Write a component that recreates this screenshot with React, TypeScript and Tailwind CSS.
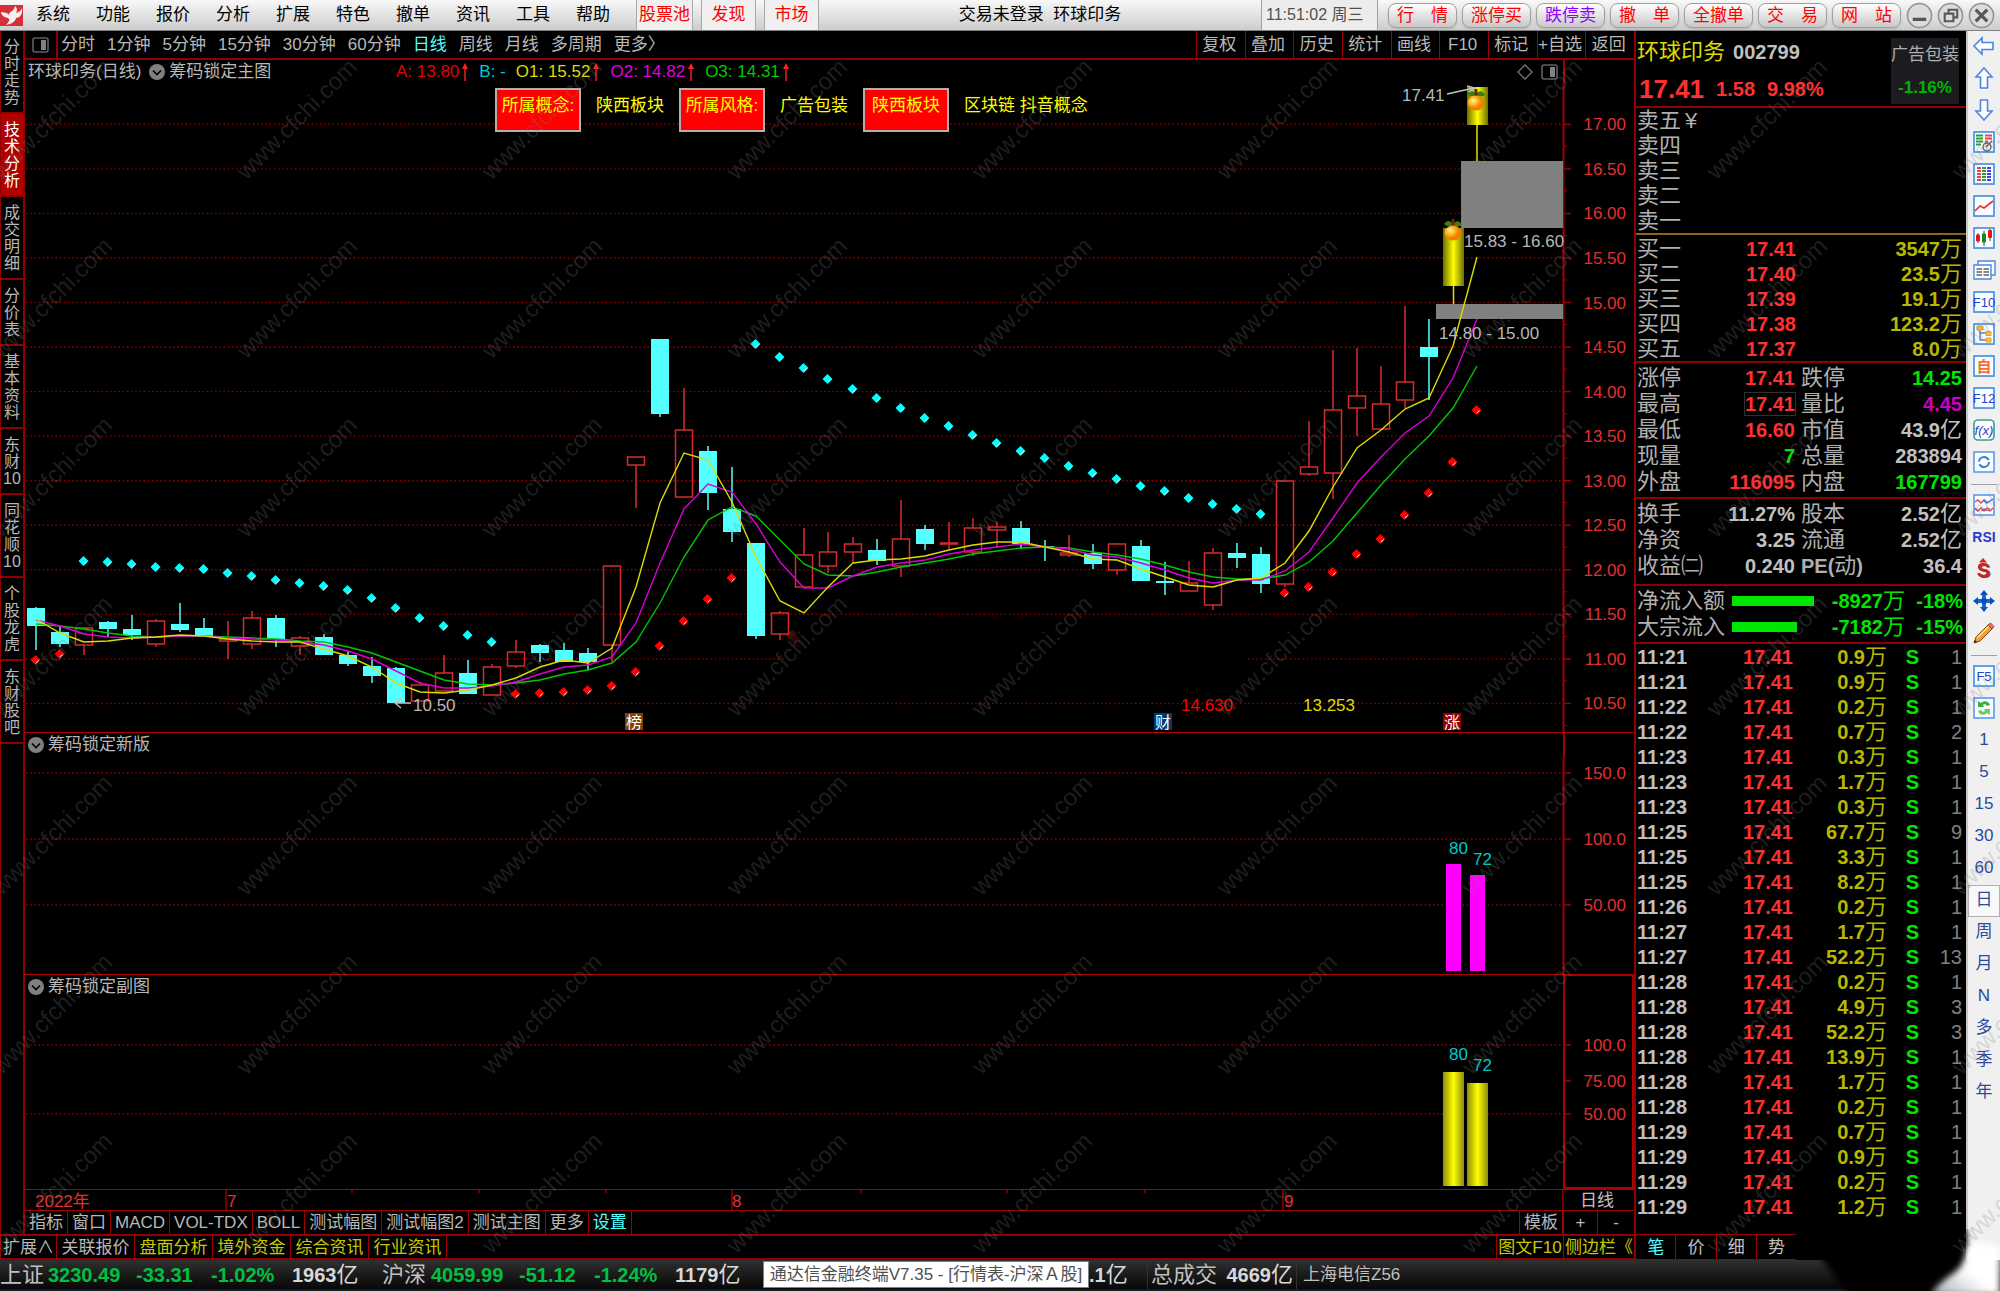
import React, { useState } from 'react';

const menus = ['系统', '功能', '报价', '分析', '扩展', '特色', '撤单', '资讯', '工具', '帮助'];
const hotMenus = ['股票池', '发现', '市场'];
const tradeButtons = ['行　情', '涨停买', '跌停卖', '撤　单', '全撤单', '交　易', '网　站'];
const periods = ['分时', '1分钟', '5分钟', '15分钟', '30分钟', '60分钟', '日线', '周线', '月线', '多周期', '更多〉'];
const chartTools = ['复权', '叠加', '历史', '统计', '画线', 'F10', '标记', '+自选', '返回'];
const sideTabs = [
  ['分', '时', '走', '势'],
  ['技', '术', '分', '析'],
  ['成', '交', '明', '细'],
  ['分', '价', '表'],
  ['基', '本', '资', '料'],
  ['东', '财', '10'],
  ['同', '花', '顺', '10'],
  ['个', '股', '龙', '虎'],
  ['东', '财', '股', '吧'],
];
const indicatorTabs = ['指标', '窗口', 'MACD', 'VOL-TDX', 'BOLL', '测试幅图', '测试幅图2', '测试主图', '更多', '设置'];

// [high, bodyTop, bodyBottom, low, up?]
type Candle = [number, number, number, number, number];
const candles: Candle[] = [
  [607, 608, 626, 650, 0], [625, 632, 644, 647, 0], [628, 628, 645, 655, 1], [621, 622, 629, 637, 0],
  [615, 629, 635, 640, 0], [619, 621, 644, 647, 1], [603, 624, 630, 632, 0], [618, 628, 637, 637, 0],
  [621, 639, 641, 659, 1], [611, 618, 644, 649, 1], [615, 618, 639, 647, 0], [636, 638, 646, 655, 1],
  [634, 637, 655, 655, 0], [651, 655, 664, 666, 0], [657, 666, 676, 683, 0], [667, 668, 703, 703, 0],
  [682, 685, 701, 701, 1], [655, 673, 691, 691, 1], [660, 673, 694, 694, 0], [664, 667, 695, 695, 1],
  [640, 652, 666, 668, 1], [644, 645, 653, 662, 0], [643, 650, 662, 662, 0], [648, 653, 662, 670, 0],
  [565, 566, 645, 662, 1], [457, 457, 465, 508, 1], [339, 339, 414, 417, 0], [388, 430, 497, 497, 1],
  [446, 451, 493, 510, 0], [467, 509, 532, 542, 0], [543, 543, 636, 639, 0], [611, 613, 634, 640, 1],
  [528, 555, 587, 587, 1], [532, 552, 566, 573, 1], [537, 544, 552, 563, 1], [539, 550, 561, 565, 0],
  [500, 539, 566, 577, 1], [525, 529, 544, 550, 0], [522, 543, 544, 549, 1], [518, 528, 552, 556, 1],
  [522, 527, 530, 547, 1], [521, 528, 544, 549, 0], [540, 546, 548, 561, 0], [535, 553, 555, 557, 1],
  [544, 553, 564, 569, 0], [543, 544, 570, 575, 1], [540, 546, 581, 581, 0], [562, 581, 583, 595, 0],
  [561, 583, 591, 591, 1], [548, 553, 605, 610, 1], [543, 553, 558, 568, 0], [547, 554, 584, 593, 0],
  [481, 481, 584, 587, 1], [421, 467, 474, 476, 1], [350, 410, 473, 499, 1], [348, 396, 408, 436, 1],
  [366, 404, 429, 429, 1], [306, 382, 400, 408, 1], [319, 347, 357, 400, 0],
];
const o1 = [619, 633, 642, 641, 638, 637, 635, 636, 639, 641, 642, 642, 649, 656, 667, 683, 692, 693, 690, 685, 678, 667, 660, 663, 648, 587, 503, 453, 460, 502, 557, 601, 613, 587, 563, 560, 559, 556, 550, 545, 542, 542, 547, 552, 559, 560, 569, 577, 585, 587, 580, 578, 563, 531, 487, 448, 430, 409, 398, 346, 257];
const o2 = [620, 626, 634, 637, 638, 637, 636, 636, 638, 639, 640, 642, 645, 651, 659, 671, 683, 688, 688, 686, 682, 674, 667, 665, 657, 623, 563, 509, 484, 492, 524, 562, 588, 588, 576, 567, 563, 560, 554, 550, 547, 544, 547, 549, 555, 557, 563, 570, 578, 583, 580, 580, 571, 552, 518, 483, 457, 433, 416, 378, 319];
const o3 = [624, 626, 629, 633, 636, 637, 636, 636, 637, 638, 639, 641, 642, 647, 653, 662, 671, 680, 684, 685, 683, 680, 674, 670, 663, 642, 603, 557, 520, 507, 516, 540, 564, 575, 576, 572, 567, 563, 559, 554, 551, 548, 547, 548, 552, 555, 559, 565, 572, 577, 579, 579, 575, 562, 541, 513, 485, 459, 436, 408, 366];
const upperDots: [number, number[]][] = [
  [2, [561, 562, 564, 567, 568, 569, 573, 576, 580, 583, 586, 590, 598, 608, 618, 626, 635, 642]],
  [30, [344, 357, 368, 379, 389, 398, 408, 418, 426, 435, 443, 451, 458, 466, 473, 479, 486, 491, 498, 504, 509, 514]],
];
const lowerDots: [number, number[]][] = [
  [0, [660, 654]],
  [20, [694, 693, 692, 690, 686, 672, 646, 621, 599, 578]],
  [52, [593, 587, 572, 554, 539, 515, 493, 462, 410]],
];
const prices = ['17.00', '16.50', '16.00', '15.50', '15.00', '14.50', '14.00', '13.50', '13.00', '12.50', '12.00', '11.50', '11.00', '10.50'];

const asks = ['卖五', '卖四', '卖三', '卖二', '卖一'];
const bids = [
  ['买一', '17.41', '3547'],
  ['买二', '17.40', '23.5'],
  ['买三', '17.39', '19.1'],
  ['买四', '17.38', '123.2'],
  ['买五', '17.37', '8.0'],
];
const RED = 'text-[#ff3030]';
const GREEN = 'text-[#00e600]';
const GRAY = 'text-[#c0c0c0]';
const stats = [
  ['涨停', '17.41', RED, '跌停', '14.25', GREEN, ''],
  ['最高', '17.41', RED, '量比', '4.45', 'text-[#c800c8]', ''],
  ['最低', '16.60', RED, '市值', '43.9', GRAY, '亿'],
  ['现量', '7', GREEN, '总量', '283894', GRAY, ''],
  ['外盘', '116095', RED, '内盘', '167799', GREEN, ''],
];
const stats2 = [
  ['换手', '11.27%', GRAY, '股本', '2.52', GRAY, '亿'],
  ['净资', '3.25', GRAY, '流通', '2.52', GRAY, '亿'],
  ['收益㈡', '0.240', GRAY, 'PE(动)', '36.4', GRAY, ''],
];
const ticks = [
  ['11:21', '0.9', '1'], ['11:21', '0.9', '1'], ['11:22', '0.2', '1'], ['11:22', '0.7', '2'],
  ['11:23', '0.3', '1'], ['11:23', '1.7', '1'], ['11:23', '0.3', '1'], ['11:25', '67.7', '9'],
  ['11:25', '3.3', '1'], ['11:25', '8.2', '1'], ['11:26', '0.2', '1'], ['11:27', '1.7', '1'],
  ['11:27', '52.2', '13'], ['11:28', '0.2', '1'], ['11:28', '4.9', '3'], ['11:28', '52.2', '3'],
  ['11:28', '13.9', '1'], ['11:28', '1.7', '1'], ['11:28', '0.2', '1'], ['11:29', '0.7', '1'],
  ['11:29', '0.9', '1'], ['11:29', '0.2', '1'], ['11:29', '1.2', '1'],
];

const cx = (i: number) => Math.round(35.5 + 24.03 * i);
const priceY = (p: number) => 124.3 + (17 - p) * 89.1;
const linePoints = (ys: number[]) => ys.map((y, i) => `${cx(i)},${y}`).join(' ');

const GridLine = ({ y, x1 = 26, x2 = 1563 }: { y: number; x1?: number; x2?: number }) => (
  <line x1={x1} x2={x2} y1={y} y2={y} stroke="#8c0000" strokeWidth="1.4" strokeDasharray="1.6 2.6" />
);

const AxisLabel = ({ y, text }: { y: number; text: string }) => (
  <>
    <line x1="1563" x2="1571" y1={y} y2={y} stroke="#a00000" strokeWidth="1.4" />
    <text x="1626" y={y + 6} textAnchor="end" fill="#e03030">{text}</text>
  </>
);

const Fruit = ({ x, y }: { x: number; y: number }) => (
  <g>
    <path d={`M${x - 9} ${y - 8} q4 -6 9 0 q5 -6 9 1 q-5 3 -9 0 q-5 3 -9 -1z`} fill="#3f7d12" />
    <path d={`M${x} ${y - 6} l0 -7`} stroke="#5a2c0c" strokeWidth="3" />
    <ellipse cx={x} cy={y + 1} rx="8.5" ry="7.5" fill="url(#fruit)" />
  </g>
);

const Diamond = ({ x, y, color }: { x: number; y: number; color: string }) => (
  <g>
    <path d={`M${x - 0.5} ${y - 5} l5 5 l-5 5 l-5 -5z`} fill={color} />
    <path d={`M${x + 2.5} ${y + 0.5} l-2.5 2.8`} stroke="#ffffff" strokeWidth="1" />
  </g>
);

const Marker = ({ x, text, fill }: { x: number; text: string; fill: string }) => (
  <g>
    <rect x={x} y="713" width="18" height="17" fill={fill} />
    <text x={x + 9} y="728" textAnchor="middle" fontSize="16" fill="#ffffff">{text}</text>
  </g>
);

const MainChart = () => (
  <svg viewBox="25 84 1609 648" className="block w-full h-auto text-[17px]" role="img" aria-label="环球印务 日线">
    <defs>
      <linearGradient id="gold">
        <stop offset="0" stopColor="#6e6e00" />
        <stop offset="0.5" stopColor="#ffff00" />
        <stop offset="1" stopColor="#6e6e00" />
      </linearGradient>
      <radialGradient id="fruit" cx="0.35" cy="0.35">
        <stop offset="0" stopColor="#fff6b0" />
        <stop offset="0.45" stopColor="#ffc02a" />
        <stop offset="1" stopColor="#f07c00" />
      </radialGradient>
      <linearGradient id="trail" x1="0" y1="0" x2="1" y2="1">
        <stop offset="0" stopColor="#701818" />
        <stop offset="1" stopColor="#000000" stopOpacity="0" />
      </linearGradient>
    </defs>
    {prices.map(p => {
      const y = priceY(Number(p));
      return (
        <React.Fragment key={p}>
          {p === '11.00' ? (
            <>
              <GridLine y={y} x2={786} />
              <GridLine y={y} x1={1248} />
            </>
          ) : (
            <GridLine y={y} />
          )}
          <AxisLabel y={y} text={p} />
          <line x1="1563" x2="1567" y1={y + 22} y2={y + 22} stroke="#a00000" />
        </React.Fragment>
      );
    })}
    <line x1="1563.5" x2="1563.5" y1="84" y2="732" stroke="#a00000" strokeWidth="2" />
    <path d="M785 635 L793 630 L809 650 L800 650z" fill="url(#trail)" />

    <rect x="1461" y="161" width="102" height="67" fill="#808080" />
    <rect x="1436" y="304" width="127" height="15" fill="#808080" />

    {candles.map(([high, top, bottom, low, up], i) => {
      const x = cx(i);
      return up ? (
        <g key={i} stroke="#d42c2c" strokeWidth="1.5" fill="none">
          <path d={`M${x} ${high} V${top} M${x} ${bottom} V${low}`} />
          <rect x={x - 8.5} y={top} width="17" height={bottom - top} />
        </g>
      ) : (
        <g key={i} fill="#54ffff">
          <rect x={x - 0.75} y={high} width="1.5" height={low - high} />
          <rect x={x - 9} y={top} width="18" height={bottom - top} />
        </g>
      );
    })}
    <rect x="1443" y="228" width="21" height="58" fill="url(#gold)" />
    <rect x="1467" y="87" width="21" height="38" fill="url(#gold)" />
    <path d="M1453.5 286 V304 M1477 125 V161" stroke="#e0e000" strokeWidth="1.5" />
    <Fruit x={1453} y={232} />
    <Fruit x={1476} y={102} />

    <polyline points={linePoints(o3)} fill="none" stroke="#00c800" strokeWidth="1.4" />
    <polyline points={linePoints(o2)} fill="none" stroke="#d800d8" strokeWidth="1.4" />
    <polyline points={linePoints(o1)} fill="none" stroke="#dcdc00" strokeWidth="1.4" />

    {upperDots.map(([start, ys]) => ys.map((y, i) => <Diamond key={start + i} x={cx(start + i)} y={y} color="#00ffff" />))}
    {lowerDots.map(([start, ys]) => ys.map((y, i) => <Diamond key={start + i} x={cx(start + i)} y={y} color="#ff0000" />))}

    <g fill="#b8b8b8">
      <text x="1402" y="101">17.41</text>
      <text x="1464" y="247">15.83 - 16.60</text>
      <text x="1439" y="339">14.80 - 15.00</text>
      <text x="413" y="711">10.50</text>
    </g>
    <path d="M1447 94 L1474 88 M1467 86 L1475 88 L1469 92 M395 703 H411 M401 698 L395 703 L401 708" fill="none" stroke="#c0c0c0" strokeWidth="1.4" />
    <text x="1181" y="711" fill="#ff0000">14.630</text>
    <text x="1303" y="711" fill="#dcdc00">13.253</text>
    <Marker x={625} text="榜" fill="#804000" />
    <Marker x={1154} text="财" fill="#003a70" />
    <Marker x={1443} text="涨" fill="#900000" />
  </svg>
);

const LockChart = () => (
  <svg viewBox="25 757 1609 217" className="block w-full h-auto text-[17px]" role="img" aria-label="筹码锁定新版">
    {[['150.0', 773], ['100.0', 839], ['50.00', 905]].map(([t, y]) => (
      <React.Fragment key={t}>
        <GridLine y={y as number} />
        <AxisLabel y={y as number} text={t as string} />
      </React.Fragment>
    ))}
    <line x1="1563.5" x2="1563.5" y1="757" y2="974" stroke="#a00000" strokeWidth="2" />
    <rect x="1446" y="864" width="15" height="107" fill="#ff00ff" />
    <rect x="1470" y="875" width="15" height="96" fill="#ff00ff" />
    <text x="1449" y="854" fill="#00c8c8">80</text>
    <text x="1473" y="865" fill="#00c8c8">72</text>
  </svg>
);

const LockSubChart = () => (
  <svg viewBox="25 999 1609 190" className="block w-full h-auto text-[17px]" role="img" aria-label="筹码锁定副图">
    <defs>
      <linearGradient id="goldBar">
        <stop offset="0" stopColor="#8c8c10" />
        <stop offset="0.5" stopColor="#ffff00" />
        <stop offset="1" stopColor="#8c8c10" />
      </linearGradient>
    </defs>
    {[['100.0', 1045], ['75.00', 1081], ['50.00', 1114]].map(([t, y]) => (
      <React.Fragment key={t}>
        {t !== '75.00' && <GridLine y={y as number} />}
        <AxisLabel y={y as number} text={t as string} />
      </React.Fragment>
    ))}
    <path d="M1564 999 V1188 H1633 V999" fill="none" stroke="#b00000" strokeWidth="2" />
    <rect x="1443" y="1072" width="21" height="114" fill="url(#goldBar)" />
    <rect x="1467" y="1083" width="21" height="103" fill="url(#goldBar)" />
    <text x="1449" y="1060" fill="#00c8c8">80</text>
    <text x="1473" y="1071" fill="#00c8c8">72</text>
  </svg>
);

const DateAxis = () => (
  <svg viewBox="25 1190 1609 20" className="block w-full h-auto text-[17px]" role="img" aria-label="日期">
    <g stroke="#a00000" strokeWidth="1.4">
      {[226, 732, 1283, 1563].map(x => <line key={x} x1={x} x2={x} y1="1190" y2="1210" />)}
      {[352, 479, 606, 861, 1007, 1145].map(x => <line key={x} x1={x} x2={x} y1="1190" y2="1193" />)}
    </g>
    <g fill="#e03030">
      <text x="35" y="1207">2022年</text>
      <text x="227" y="1207">7</text>
      <text x="732" y="1207">8</text>
      <text x="1284" y="1207">9</text>
    </g>
    <text x="1580" y="1206" fill="#c0c0c0">日线</text>
  </svg>
);

const Chevron = () => (
  <svg viewBox="0 0 16 16" className="size-4 shrink-0">
    <circle cx="8" cy="8" r="8" fill="#808080" />
    <path d="M4 6.5 L8 10.5 L12 6.5" fill="none" stroke="#000000" strokeWidth="1.6" />
  </svg>
);

const PanelIcon = () => (
  <svg viewBox="0 0 18 16" className="w-[18px] h-4">
    <rect x="1" y="1" width="15" height="14" rx="2" fill="none" stroke="#606060" strokeWidth="1.6" />
    <rect x="9" y="3" width="5" height="10" fill="#808080" />
  </svg>
);

const Up = () => (
  <svg viewBox="0 0 8 18" className="w-2 h-[18px]">
    <path d="M4 0 L7 6 H1z" fill="#ff2020" />
    <path d="M4 5 V18" stroke="#ff2020" strokeWidth="1.4" />
  </svg>
);

const PanelHeader = ({ title, active = false }: { title: string; active?: boolean }) => (
  <div className="flex h-6 items-center">
    <button className="flex items-center gap-1 pl-[3px]">
      <Chevron />
      <span>{title}</span>
    </button>
    <div className={`ml-auto h-full w-[71px] border-l-2 border-[#a00000] ${active ? 'border-t border-r-2' : ''}`} />
  </div>
);

const Frame = ({ children, color = '#3a8ee8' }: { children?: React.ReactNode; color?: string }) => (
  <svg viewBox="0 0 24 24" className="size-6">
    <rect x="2" y="2" width="20" height="20" fill="#fafcff" stroke={color} strokeWidth="1.6" />
    {children}
  </svg>
);

const FText = ({ children }: { children: string }) => (
  <text x="12" y="17" textAnchor="middle" fontSize="13" fill="#2244cc">{children}</text>
);

const toolIcons: [string, React.ReactNode][] = [
  ['后退', <svg viewBox="0 0 24 24" className="size-6"><path d="M2 12 L10 4 V8.5 H21 V15.5 H10 V20z" fill="#ffffff" stroke="#4a86e0" strokeWidth="1.6" /></svg>],
  ['上一个', <svg viewBox="0 0 24 24" className="size-6"><path d="M12 2 L20 11 H15.5 V22 H8.5 V11 H4z" fill="#ffffff" stroke="#4a86e0" strokeWidth="1.6" /></svg>],
  ['下一个', <svg viewBox="0 0 24 24" className="size-6"><path d="M12 22 L20 13 H15.5 V2 H8.5 V13 H4z" fill="#ffffff" stroke="#4a86e0" strokeWidth="1.6" /></svg>],
  ['自选报价', (
    <Frame>
      <path d="M4 5.5h7M4 8.5h7M4 11.5h7M4 14.5h5" stroke="#2f9a3c" strokeWidth="2" />
      <path d="M13 5.5h7M13 8.5h7M13 11.5h3" stroke="#f04040" strokeWidth="2" />
      <circle cx="15" cy="17" r="4" fill="#e8e8e8" stroke="#606060" strokeWidth="1.4" />
      <path d="M14 17 L20 11" stroke="#606060" strokeWidth="1.6" />
    </Frame>
  )],
  ['行情列表', (
    <Frame>
      <path d="M7 5V20" stroke="#f04040" strokeWidth="4" strokeDasharray="2 1" />
      <path d="M12 5V20" stroke="#2f9a3c" strokeWidth="4" strokeDasharray="2 1" />
      <path d="M17 5V20" stroke="#4040f0" strokeWidth="4" strokeDasharray="2 1" />
    </Frame>
  )],
  ['分时图', <Frame><path d="M3 17 L8 12 L12 14 L21 7" fill="none" stroke="#e83030" strokeWidth="1.6" /></Frame>],
  ['K线图', (
    <Frame>
      <path d="M6 7V17M12 5V20M18 3V15" stroke="#404040" />
      <path d="M4.5 9h3v6h-3zM16.5 4.5h3v7h-3z" fill="#f01010" stroke="#f01010" />
      <path d="M10.5 8h3v8h-3z" fill="#108a20" stroke="#108a20" />
    </Frame>
  )],
  ['多窗口', (
    <svg viewBox="0 0 24 24" className="size-6">
      <path d="M6 3H23V17H6z" fill="#ffffff" stroke="#4a86e0" strokeWidth="1.4" />
      <path d="M2 7H19V21H2z" fill="#ffffff" stroke="#4a86e0" strokeWidth="1.4" />
      <path d="M4.5 11h5.5M4.5 14h5.5M4.5 17h5.5M11.5 11h5.5M11.5 14h5.5M11.5 17h5.5" stroke="#606060" strokeWidth="1.5" />
    </svg>
  )],
  ['F10', <Frame><FText>F10</FText></Frame>],
  ['板块树', (
    <Frame>
      <path d="M8 8V18H14M8 11H14" fill="none" stroke="#5080c0" strokeWidth="1.4" />
      <path d="M5 4h6v4h-6zM14 9.5h5v4h-5zM14 16h5v4h-5z" fill="#ffbe3c" stroke="#e8a020" />
    </Frame>
  )],
  ['自选股', <Frame><text x="12" y="18" textAnchor="middle" fontSize="15" fontWeight="bold" fill="#f07030">自</text></Frame>],
  ['F12', <Frame><FText>F12</FText></Frame>],
  ['公式', (
    <svg viewBox="0 0 24 24" className="size-6">
      <rect x="2" y="2" width="20" height="20" rx="4" fill="#ffffff" stroke="#3a9a9a" strokeWidth="1.6" />
      <text x="12" y="17" textAnchor="middle" fontSize="13" fontStyle="italic" fill="#2244cc">f(x)</text>
    </svg>
  )],
  ['刷新', <Frame color="#5a9af0"><circle cx="12" cy="12" r="5" fill="none" stroke="#3a80c8" strokeWidth="2" strokeDasharray="13 2.7" /></Frame>],
  ['', null],
  ['叠加曲线', (
    <Frame color="#5a9af0">
      <path d="M3 9 L6 7 L9 10 L12 7 L15 10" fill="none" stroke="#e04040" strokeWidth="1.4" />
      <path d="M12 7 L15 10 L18 8 L21 6 M3 16 L6 18" fill="none" stroke="#4060e0" strokeWidth="1.4" />
      <path d="M3 15 L6 18 L9 15 L12 18 L15 15 L18 18 L21 15" fill="none" stroke="#e04040" strokeWidth="1.4" />
      <path d="M9 18 L12 16 L15 18 L18 15" fill="none" stroke="#4060e0" />
    </Frame>
  )],
  ['RSI', <span className="text-[14px] font-bold text-[#2a3ad0]">RSI</span>],
  ['资金', (
    <svg viewBox="0 0 24 24" className="size-6">
      <text x="12.5" y="20.5" textAnchor="middle" fontSize="20" fontWeight="bold" fill="#505050">S</text>
      <text x="11.5" y="20" textAnchor="middle" fontSize="20" fontWeight="bold" fill="#d42020">S</text>
      <path d="M11 1 L15 5.5 H7z" fill="#d42020" />
    </svg>
  )],
  ['移动', (
    <svg viewBox="0 0 24 24" className="size-6">
      <path d="M12 1 L16 6 H8zM12 23 L16 18 H8zM1 12 L6 8 V16zM23 12 L18 8 V16z" fill="#0a50b8" />
      <path d="M12 6V18M6 12H18" stroke="#1a68d8" strokeWidth="4" strokeDasharray="4 4" />
      <circle cx="12" cy="12" r="3" fill="#0a50b8" />
    </svg>
  )],
  ['画笔', (
    <svg viewBox="0 0 24 24" className="size-6">
      <path d="M2 22 L4 16 L16 4 L20 8 L8 20z" fill="#f0a030" stroke="#7a4a10" />
      <path d="M5 17 L17 5" stroke="#ffe080" strokeWidth="1.6" />
      <path d="M16 4 L18.5 2 L22 5.5 L20 8z" fill="#e87070" stroke="#a04040" />
      <path d="M2 22 L3 19 L5 21z" fill="#202020" />
    </svg>
  )],
  ['', null],
  ['F5', <Frame><FText>F5</FText></Frame>],
  ['同步', (
    <Frame color="#5a9af0">
      <path d="M6 11 V5 L9 7 C12 4 17 5 18 9 L15 10 C14 8 12 8 11 9 L12 11z" fill="#3cb044" />
      <path d="M18 13 V19 L15 17 C12 20 7 19 6 15 L9 14 C10 16 12 16 13 15 L12 13z" fill="#6ccc60" />
    </Frame>
  )],
];
const periodKeys = ['1', '5', '15', '30', '60', '日', '周', '月', 'N', '多', '季', '年'];

const TopBar = () => (
  <header className="flex h-[31px] items-center border-b border-[#808080] bg-linear-to-b from-[#f8f8f8] to-[#cdcdcd] text-black">
    <svg viewBox="0 0 24 24" className="size-6 shrink-0">
      <rect x="0" y="2" width="23" height="21" fill="#d83038" />
      <path d="M1 9 C5 10 7 9 9 12 C9 8 14 9 15 3 C18 6 17 8 16 10 C19 9 21 8 22 5 C23 12 19 15 16 15 C15 19 11 21 6 22 C10 18 10 16 8 15 C5 14 2 14 1 9z" fill="#f8f0f0" />
    </svg>
    <nav className="flex pl-3">
      {menus.map(m => <button key={m} className="w-[60px] text-left">{m}</button>)}
    </nav>
    <div className="flex h-full gap-2">
      {hotMenus.map(m => (
        <button key={m} className="h-full border-x border-[#a8a8a8] bg-[#f0f0f0] px-[2px] min-w-[55px] text-[#ff0000]">{m}</button>
      ))}
    </div>
    <div className="flex-1 text-center">交易未登录&nbsp; 环球印务</div>
    <div className="flex h-full w-[117px] shrink-0 items-center border-x border-[#a0a0a0] bg-[#ececec] pl-1 text-[16px] whitespace-nowrap text-[#505050]">11:51:02 周三</div>
    <div className="flex gap-[5px] pl-[10px]">
      {tradeButtons.map((b, i) => (
        <button key={b} className={`h-[25px] w-[69px] rounded-lg border border-[#a0a0a0] bg-linear-to-b from-white to-[#c8c8c8] leading-none whitespace-nowrap shadow ${i === 2 ? 'text-[#9000ff]' : 'text-[#ff0000]'}`}>{b}</button>
      ))}
    </div>
    <div className="flex gap-1 px-[5px]">
      {['M7 18H21', 'M8 12H17V20H8zM12 12V8H21V16H17', 'M8 8L20 20M20 8L8 20'].map((d, i) => (
        <button key={d} aria-label={['最小化', '还原', '关闭'][i]}>
          <svg viewBox="0 0 28 28" className="size-[27px]">
            <circle cx="14" cy="14" r="12.5" fill="#dcdcdc" stroke="#909090" strokeWidth="1.6" />
            <path d={d} fill="none" stroke="#585858" strokeWidth={i === 1 ? 2.2 : 3.4} />
          </svg>
        </button>
      ))}
    </div>
  </header>
);

const StatRows = ({ rows }: { rows: string[][] }) => (
  <table className="w-full table-fixed leading-none">
    <tbody>
      {rows.map(([l1, v1, c1, l2, v2, c2, unit]) => (
        <tr key={l1} className="h-[26px]">
          <th scope="row" className="w-[70px] text-left text-[22px] font-normal whitespace-nowrap text-[#b0b0b0]">{l1}</th>
          <td className={`w-[88px] text-right font-bold ${c1}`}>
            {l1 === '最高' ? <span className="outline outline-[#303030]">{v1}</span> : v1}
          </td>
          <th scope="row" className="w-[70px] pl-[6px] text-left text-[22px] font-normal whitespace-nowrap text-[#b0b0b0]">
            {l2 === 'PE(动)' ? <><b className="text-[20px]">PE(</b>动<b className="text-[20px]">)</b></> : l2}
          </th>
          <td className={c2}>
            <div className="flex h-[26px] items-center justify-end"><b>{v2}</b><span className="text-[22px]">{unit}</span></div>
          </td>
        </tr>
      ))}
    </tbody>
  </table>
);

const QuotePanel = () => (
  <aside className="flex w-[332px] shrink-0 flex-col border-l-2 border-[#900000] text-[20px] leading-none text-[#b0b0b0]">
    <div className="flex h-[77px] justify-between border-b-2 border-[#900000] pr-[7px] pl-[1px]">
      <div>
        <div className="flex items-center gap-2 pt-2">
          <h1 className="text-[22px] leading-[26px] text-[#dcdc00]">环球印务</h1>
          <b className="text-[#c0c0c0]">002799</b>
        </div>
        <div className="flex items-center gap-3 pt-[11px] pl-[2px] font-bold text-[#ff3030]">
          <span className="text-[26px]">17.41</span>
          <span>1.58</span>
          <span>9.98%</span>
        </div>
      </div>
      <div className="mt-[7px] flex h-[66px] w-[68px] flex-col items-center gap-[16px] bg-[#1c1c20] pt-2 text-[17px] whitespace-nowrap">
        <span>广告包装</span>
        <b className="text-[#00b400]">-1.16%</b>
      </div>
    </div>
    <div className="border-b-2 border-[#8a6420] pl-[1px]">
      {asks.map((a, i) => (
        <div key={a} className="flex h-[25px] items-center text-[22px]">{a}{i === 0 && <span className="pl-1">¥</span>}</div>
      ))}
    </div>
    <div className="border-b-2 border-[#900000] pt-[1px]">
      <table className="w-full table-fixed">
        <tbody>
          {bids.map(([label, price, vol]) => (
            <tr key={label} className="h-[25px]">
              <th scope="row" className="w-[70px] pl-[1px] text-left text-[22px] font-normal">{label}</th>
              <td className="w-[90px] text-right font-bold text-[#ff3030]">{price}</td>
              <td className="pr-1 text-[#b8b800]">
                <div className="flex h-[25px] items-center justify-end"><b>{vol}</b><span className="text-[22px]">万</span></div>
              </td>
            </tr>
          ))}
        </tbody>
      </table>
    </div>
    <div className="border-b-2 border-[#900000] py-[2px] pr-1 pl-[1px]"><StatRows rows={stats} /></div>
    <div className="border-b-2 border-[#900000] pt-[2px] pr-1 pb-[5px] pl-[1px]"><StatRows rows={stats2} /></div>
    <div className="border-b-2 border-[#900000] py-[2px] pr-[3px] pl-[1px]">
      {[['净流入额', '-8927', '-18%', 'w-[82px]'], ['大宗流入', '-7182', '-15%', 'w-[65px]']].map(([label, v, pct, w]) => (
        <div key={label} className="flex h-[26px] items-center text-[#00e600]">
          <span className="w-[95px] text-[22px] text-[#b0b0b0]">{label}</span>
          <span className={`h-[10px] bg-[#00e600] ${w}`} />
          <b className="ml-auto">{v}</b><span className="text-[22px]">万</span>
          <b className="w-[58px] text-right">{pct}</b>
        </div>
      ))}
    </div>
    <table className="w-full table-fixed">
      <tbody>
        {ticks.map(([time, amount, count], i) => (
          <tr key={i} className="h-[25px] font-bold">
            <td className="w-[60px] pl-[1px] text-[#c0c0c0]">{time}</td>
            <td className="w-[97px] text-right text-[#ff3030]">17.41</td>
            <td className="w-[94px] text-[#b8b800]">
              <div className="flex h-[25px] items-center justify-end">{amount}<span className="text-[22px] font-normal">万</span></div>
            </td>
            <td className="w-[34px] pr-[2px] text-right text-[#00e600]">S</td>
            <td className="pr-1 text-right font-normal text-[#808080]">{count}</td>
          </tr>
        ))}
      </tbody>
    </table>
    <div className="mt-auto flex h-[26px] w-[160px] border-y border-[#a00000] text-[17px] text-[#c0c0c0]">
      {['笔', '价', '细', '势'].map(t => (
        <button key={t} className={`flex-1 border-r border-[#a00000] last:border-r-0 ${t === '笔' ? 'text-[#54ffff]' : ''}`}>{t}</button>
      ))}
    </div>
  </aside>
);

const StatusBar = () => (
  <footer className="flex h-[31px] items-center border-b-2 border-[#141c28] bg-linear-to-b from-[#303030] to-[#080808] text-[20px] leading-none whitespace-nowrap text-[#c0c0c0]">
    <div className="flex w-[382px] items-center font-bold text-[#00c040]">
      <span className="w-[48px] text-[22px] font-normal text-[#c0c0c0]">上证</span>
      <span className="w-[88px]">3230.49</span>
      <span className="w-[75px]">-33.31</span>
      <span className="w-[81px]">-1.02%</span>
      <span className="text-[#d8d8d8]">1963<span className="text-[22px] font-normal">亿</span></span>
    </div>
    <div className="flex w-[381px] items-center font-bold text-[#00c040]">
      <span className="w-[49px] text-[22px] font-normal text-[#c0c0c0]">沪深</span>
      <span className="w-[88px]">4059.99</span>
      <span className="w-[75px]">-51.12</span>
      <span className="w-[81px]">-1.24%</span>
      <span className="text-[#d8d8d8]">1179<span className="text-[22px] font-normal">亿</span></span>
    </div>
    <div className="flex h-[27px] w-[326px] items-center justify-center border border-[#808080] bg-white text-[17px] text-[#505050]">通达信金融终端V7.35 - [行情表-沪深Ａ股]</div>
    <div className="flex w-[58px] items-center font-bold text-[#d8d8d8]">.1<span className="text-[22px] font-normal">亿</span></div>
    <div className="flex h-full w-[150px] items-center justify-between border-x border-[#303030] px-[3px]">
      <span className="text-[22px]">总成交</span>
      <span className="font-bold text-[#d8d8d8]">4669<span className="text-[22px] font-normal">亿</span></span>
    </div>
    <span className="pl-[6px] text-[17px]">上海电信Z56</span>
  </footer>
);

const Watermark = () => (
  <svg className="pointer-events-none absolute inset-0 h-full w-full" aria-hidden="true">
    <defs>
      <pattern id="wm" x="-70" y="29" width="245" height="179" patternUnits="userSpaceOnUse">
        <text x="122" y="98" textAnchor="middle" fontSize="24" fill="#808080" fillOpacity="0.23" transform="rotate(-45 122 90)">www.cfchi.com</text>
      </pattern>
    </defs>
    <rect y="60" width="100%" height="1200" fill="url(#wm)" />
  </svg>
);

export default function App() {
  const [period, setPeriod] = useState('日线');
  const [sideTab, setSideTab] = useState(1);

  return (
    <div className="relative flex flex-col overflow-hidden bg-black font-['Liberation_Sans','Noto_Sans_CJK_SC',sans-serif] text-[17px] leading-6 text-[#b8b8b8]">
      <TopBar />
      <div className="flex">
        <main className="min-w-0 flex-1">
          <div className="flex">
            <nav className="flex w-[25px] shrink-0 flex-col border-b-2 border-l border-[#900000] text-[16px]">
              {sideTabs.map((chars, i) => (
                <button
                  key={i}
                  onClick={() => setSideTab(i)}
                  className={`border-r-2 border-b-2 border-[#900000] leading-[17px] ${chars.length === 4 ? 'h-[83px]' : 'h-[66px]'} ${sideTab === i ? 'bg-[#b00000] text-white' : ''}`}
                >
                  {chars.map(c => <span key={c} className="block">{c}</span>)}
                </button>
              ))}
              <div className="flex-1 border-r-2 border-[#900000]" />
            </nav>

            <div className="min-w-0 flex-1">
              <div className="flex h-[29px] items-center border-b-2 border-[#900000] whitespace-nowrap">
                <button aria-label="侧栏" className="flex h-full w-[33px] items-center justify-center border-r-2 border-[#900000]"><PanelIcon /></button>
                <div className="flex gap-3 pl-[3px]">
                  {periods.map(p => (
                    <button key={p} onClick={() => setPeriod(p)} className={period === p ? 'text-[#54ffff]' : ''}>{p}</button>
                  ))}
                </div>
                <div className="ml-auto grid h-full w-[438px] grid-cols-9">
                  {chartTools.map(t => <button key={t} className="border-l border-[#a00000] pr-[3px]">{t}</button>)}
                </div>
              </div>

              <section className="relative border-b border-[#b00000]">
                <div className="flex h-6 items-center whitespace-nowrap">
                  <div className="flex w-[371px] items-center gap-2 pl-[3px]">
                    <span>环球印务(日线)</span>
                    <button className="flex items-center gap-1"><Chevron />筹码锁定主图</button>
                  </div>
                  <div className="flex items-center gap-[10px]">
                    <span className="flex items-center gap-[2px] text-[#e00000]">A: 13.80<Up /></span>
                    <span className="text-[#00c8d8]">B: -</span>
                    <span className="flex items-center gap-[2px] text-[#dcdc00]">O1: 15.52<Up /></span>
                    <span className="flex items-center gap-[2px] text-[#e000e0]">O2: 14.82<Up /></span>
                    <span className="flex items-center gap-[2px] text-[#00c800]">O3: 14.31<Up /></span>
                  </div>
                  <div className="ml-auto flex items-center gap-2 pr-1">
                    <svg viewBox="0 0 16 16" className="size-4"><path d="M8 1 L15 8 L8 15 L1 8z" fill="none" stroke="#707070" strokeWidth="1.4" /></svg>
                    <PanelIcon />
                  </div>
                  <div className="h-full w-[71px] border-l-2 border-[#a00000]" />
                </div>
                <MainChart />
                <div className="absolute top-7 left-[470px] flex gap-[15px] whitespace-nowrap text-[#ffff00]">
                  <span className="h-[44px] w-[86px] border-2 border-[#b0b0b0] bg-[#ff0000] pt-[4px] text-center">所属概念:</span>
                  <span className="pt-[6px]">陕西板块</span>
                  <span className="h-[44px] w-[86px] border-2 border-[#b0b0b0] bg-[#ff0000] pt-[4px] text-center">所属风格:</span>
                  <span className="pt-[6px]">广告包装</span>
                  <span className="h-[44px] w-[86px] border-2 border-[#b0b0b0] bg-[#ff0000] pt-[4px] text-center">陕西板块</span>
                  <span className="pt-[6px]">区块链 抖音概念</span>
                </div>
              </section>

              <section className="border-b border-[#b00000]">
                <PanelHeader title="筹码锁定新版" />
                <LockChart />
              </section>
              <section className="border-b border-[#b00000]">
                <PanelHeader title="筹码锁定副图" active />
                <LockSubChart />
              </section>
              <section className="border-b border-[#a00000]">
                <DateAxis />
              </section>

              <div className="flex h-[25px] border-b-2 border-[#900000] whitespace-nowrap">
                {indicatorTabs.map(t => (
                  <button key={t} className={`border-r border-[#a00000] px-1 ${t === '设置' ? 'text-[#54ffff]' : ''}`}>{t}</button>
                ))}
                <button className="ml-auto w-[44px] border-x border-[#a00000]">模板</button>
                <button aria-label="放大" className="w-[35px] border-x border-[#a00000]">+</button>
                <button aria-label="缩小" className="w-[36px]">-</button>
              </div>
            </div>
          </div>

          <div className="flex h-6 border-b-2 border-[#900000] whitespace-nowrap">
            <button className="w-[57px] border-x border-[#a00000]">扩展∧</button>
            <button className="w-[78px] border-r border-[#a00000]">关联报价</button>
            {['盘面分析', '境外资金', '综合资讯', '行业资讯'].map(t => (
              <button key={t} className="w-[78px] border-r border-[#a00000] text-[#c8c800]">{t}</button>
            ))}
            <button className="ml-auto w-[68px] border-x border-[#a00000] text-[#c8c800]">图文F10</button>
            <button className="w-[70px] text-[#c8c800]">侧边栏《</button>
          </div>
        </main>

        <QuotePanel />

        <nav className="flex w-[34px] shrink-0 flex-col items-center border-l-2 border-[#c8c8c8] bg-[#f0f0f0] text-[#2a4a9a]">
          {toolIcons.map(([label, icon], i) =>
            icon ? (
              <button key={i} aria-label={label} className="flex h-8 items-center justify-center pb-[2px]">{icon}</button>
            ) : (
              <div key={i} className="flex h-[11px] w-full items-center px-[3px]"><div className="w-full border-t border-[#a0a0a0]" /></div>
            )
          )}
          {periodKeys.map(k => (
            <button key={k} className={`h-8 w-full pb-[2px] ${k === '日' ? 'border border-[#b0b0b0] bg-[#f8f8f8]' : ''}`}>{k}</button>
          ))}
        </nav>
      </div>
      <StatusBar />

      <svg viewBox="0 0 215 62" className="pointer-events-none absolute right-0 bottom-0 h-[62px] w-[215px]" aria-hidden="true">
        <defs>
          <filter id="soft"><feGaussianBlur stdDeviation="3" /></filter>
          <linearGradient id="corner" x1="0" y1="1" x2="1" y2="0">
            <stop offset="0" stopColor="#a8acb0" />
            <stop offset="0.5" stopColor="#ffffff" />
          </linearGradient>
        </defs>
        <path d="M12 8 C40 20 40 45 70 70 H150 C175 50 185 45 181 0 H60z" fill="#000000" filter="url(#soft)" />
        <path d="M146 66 C160 44 176 46 180 28 C183 12 190 10 215 18 V66z" fill="url(#corner)" filter="url(#soft)" />
      </svg>
      <Watermark />
    </div>
  );
}
